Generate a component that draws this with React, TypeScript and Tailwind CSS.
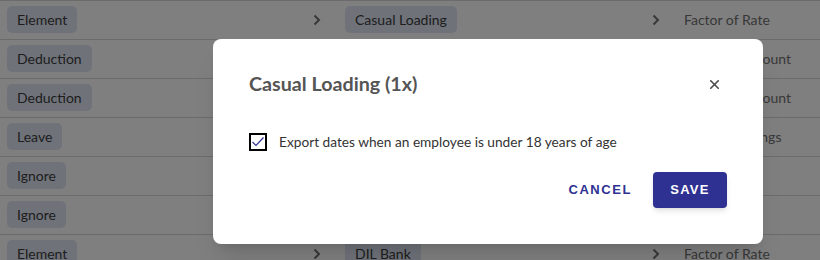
import { X } from "lucide-react"

type Row = {
  kind: string
  target?: string
  rule?: string
}

// rows behind the dialog; middle column is mostly hidden by the modal
const rows: Row[] = [
  { kind: "Element", target: "Casual Loading", rule: "Factor of Rate" },
  { kind: "Deduction", target: "Union Fees", rule: "Standard Amount" },
  { kind: "Deduction", target: "Salary Sacrifice", rule: "Standard Amount" },
  { kind: "Leave", target: "Annual Leave", rule: "Hourly Earnings" },
  { kind: "Ignore" },
  { kind: "Ignore" },
  { kind: "Element", target: "DIL Bank", rule: "Factor of Rate" },
]

function Chevron() {
  return (
    <svg width="8" height="12" viewBox="0 0 8 12" className="shrink-0">
      <polyline points="1.5,1.5 6,6 1.5,10.5" fill="none" stroke="#707070" strokeWidth="2" />
    </svg>
  )
}

function Pill({ children }: { children: React.ReactNode }) {
  return (
    <span className="inline-flex h-[27px] items-center rounded-[5px] bg-[#dee5f3] px-[10px] text-[14px] text-[#3c3c3c]">
      {children}
    </span>
  )
}

export default function App() {
  return (
    <div className="relative h-[260px] w-[820px] overflow-hidden bg-white font-['Lato','Liberation_Sans',sans-serif]">
      {/* mapping table */}
      <div className="flex flex-col">
        {rows.map((r, i) => (
          <div key={i} className="flex h-[39px] items-center border-t border-[#d6d6d6] pb-[1px] pl-[7px]">
            <div className="w-[306px]">
              <Pill>{r.kind}</Pill>
            </div>
            {r.target ? <Chevron /> : <div className="w-[8px]" />}
            <div className="ml-[24px] w-[307px]">{r.target && <Pill>{r.target}</Pill>}</div>
            {r.rule ? <Chevron /> : <div className="w-[8px]" />}
            <div className="ml-[24px] text-[14px] text-[#707070]">{r.rule}</div>
          </div>
        ))}
      </div>

      {/* backdrop */}
      <div className="absolute inset-0 bg-black/50" />

      {/* dialog */}
      <div className="absolute left-[213px] top-[39px] flex h-[205px] w-[550px] flex-col rounded-[8px] bg-white px-9 pt-[33px] shadow-xl">
        <div className="flex items-center justify-between">
          <h2 className="text-[19.7px] font-bold leading-6 text-[#555555]">Casual Loading (1x)</h2>
          <button className="mr-[5px] text-[#4a4a4a]" aria-label="Close">
            <X size={15} strokeWidth={2.6} />
          </button>
        </div>

        <label className="mt-[36px] flex items-center gap-3 text-[13.7px] text-[#333333]">
          <span className="flex h-[18px] w-[18px] items-center justify-center border-2 border-black">
            <svg width="14" height="12" viewBox="0 0 14 12">
              <polyline points="1.5,6 5,9.5 12.5,1.5" fill="none" stroke="#2e3192" strokeWidth="1.2" />
            </svg>
          </span>
          Export dates when an employee is under 18 years of age
        </label>

        <div className="mt-[19px] flex items-center justify-end gap-[21px]">
          <button className="font-['Liberation_Sans',Arial,sans-serif] text-[13px] font-bold tracking-[0.12em] text-[#2e3192]">
            CANCEL
          </button>
          <button className="h-[36px] w-[74px] rounded-[4px] bg-[#2e3192] font-['Liberation_Sans',Arial,sans-serif] text-[13px] font-bold tracking-[0.1em] text-white shadow-md">
            SAVE
          </button>
        </div>
      </div>
    </div>
  )
}
